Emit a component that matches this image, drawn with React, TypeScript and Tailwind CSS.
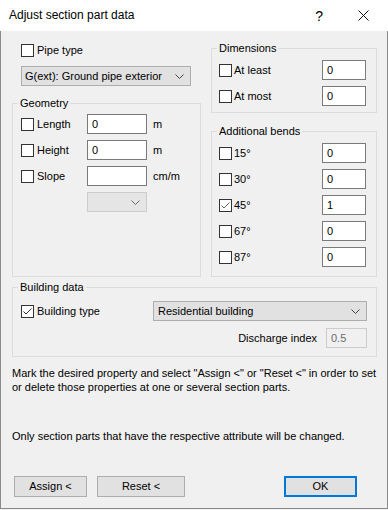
import React from "react";

function Check({ checked, light }: { checked?: boolean; light?: boolean }) {
  return (
    <span className="w-[13px] h-[13px] border border-[#333333] bg-white flex items-center justify-center shrink-0">
      {checked && (
        <svg width="11" height="11" viewBox="0 0 11 11">
          <path
            d="M1.5 5.5 L4 8 L9.5 2.5"
            fill="none"
            stroke={light ? "#6a6a6a" : "#333333"}
            strokeWidth="1"
          />
        </svg>
      )}
    </span>
  );
}

function Chevron({ color = "#444444" }: { color?: string }) {
  return (
    <svg width="9" height="5" viewBox="0 0 9 5" className="shrink-0">
      <path d="M0.5 0.5 L4.5 4.5 L8.5 0.5" fill="none" stroke={color} strokeWidth="1" />
    </svg>
  );
}

function Input({ value, w }: { value: string; w: string }) {
  return (
    <div className={`${w} h-[20px] border border-[#7a7a7a] bg-white flex items-center px-[4px] shrink-0`}>
      {value}
    </div>
  );
}

function GeoRow({ label, value, unit }: { label: string; value: string; unit: string }) {
  return (
    <div className="flex items-center h-[20px]">
      <Check />
      <span className="ml-[3px] w-[50px]">{label}</span>
      <Input value={value} w="w-[60px]" />
      <span className="ml-[6px]">{unit}</span>
    </div>
  );
}

function RightRow({ label, value, checked }: { label: string; value: string; checked?: boolean }) {
  return (
    <div className="flex items-center h-[20px]">
      <Check checked={checked} light />
      <span className="ml-[2px] w-[88px]">{label}</span>
      <Input value={value} w="w-[44px]" />
    </div>
  );
}

export default function App() {
  return (
    <div className="w-[388px] h-[510px] bg-[#f0f0f0] text-[11px] leading-[13px] text-black font-['Liberation_Sans',Arial,sans-serif]">
      <div className="h-[31px] bg-white flex items-center">
        <span className="ml-[9px] text-[12px] font-['Liberation_Sans',Arial,sans-serif]">Adjust section part data</span>
        <span className="ml-auto text-[14px] leading-[14px]">?</span>
        <svg width="11" height="11" viewBox="0 0 11 11" className="ml-[35px] mr-[19px]">
          <path d="M0.5 0.5 L10.5 10.5 M10.5 0.5 L0.5 10.5" stroke="#111111" strokeWidth="1" fill="none" />
        </svg>
      </div>
      <div className="h-[478px] border-l border-r border-b border-[#8a8a8a] flex flex-col">
        <div className="flex pl-[11px] gap-[10px]">
          <div className="w-[189px] flex flex-col">
            <div className="mt-[13px] ml-[9px] h-[13px] flex items-center">
              <Check />
              <span className="ml-[3px]">Pipe type</span>
            </div>
            <div className="mt-[9px] ml-[9px] w-[170px] h-[20px] bg-[#e1e1e1] border border-[#adadad] flex items-center justify-between pl-[3px] pr-[6px]">
              <span>G(ext): Ground pipe exterior</span>
              <Chevron />
            </div>
            <fieldset className="mt-[11px] h-[180px] border border-[#dcdcdc]">
              <legend className="ml-[5px] px-[2px] leading-[13px]">Geometry</legend>
              <div className="mt-[4px] pl-[8px] flex flex-col gap-[6px]">
                <GeoRow label="Length" value="0" unit="m" />
                <GeoRow label="Height" value="0" unit="m" />
                <GeoRow label="Slope" value="" unit="cm/m" />
                <div className="ml-[66px] w-[60px] h-[20px] bg-[#e5e5e5] border border-[#cccccc] flex items-center justify-end pr-[6px]">
                  <Chevron color="#6a6a6a" />
                </div>
              </div>
            </fieldset>
          </div>
          <div className="w-[166px] flex flex-col">
            <fieldset className="mt-[11px] h-[71px] border border-[#dcdcdc]">
              <legend className="ml-[5px] px-[2px] leading-[13px]">Dimensions</legend>
              <div className="mt-[5px] pl-[7px] flex flex-col gap-[6px]">
                <RightRow label="At least" value="0" />
                <RightRow label="At most" value="0" />
              </div>
            </fieldset>
            <fieldset className="mt-[12px] h-[152px] border border-[#dcdcdc]">
              <legend className="ml-[5px] px-[2px] leading-[13px]">Additional bends</legend>
              <div className="mt-[5px] pl-[7px] flex flex-col gap-[6px]">
                <RightRow label="15°" value="0" />
                <RightRow label="30°" value="0" />
                <RightRow label="45°" value="1" checked />
                <RightRow label="67°" value="0" />
                <RightRow label="87°" value="0" />
              </div>
            </fieldset>
          </div>
        </div>
        <fieldset className="ml-[11px] mt-[4px] w-[365px] h-[76px] border border-[#dcdcdc]">
          <legend className="ml-[5px] px-[2px] leading-[13px]">Building data</legend>
          <div className="mt-[7px] pl-[8px] flex items-center h-[20px]">
            <Check checked />
            <span className="ml-[3px] w-[116px]">Building type</span>
            <div className="w-[214px] h-[20px] bg-[#e1e1e1] border border-[#adadad] flex items-center justify-between pl-[4px] pr-[6px]">
              <span>Residential building</span>
              <Chevron />
            </div>
          </div>
          <div className="mt-[7px] pr-[9px] flex items-center justify-end h-[20px]">
            <span>Discharge index</span>
            <div className="ml-[9px] w-[41px] h-[20px] border border-[#cccccc] bg-[#f0f0f0] text-[#6d6d6d] flex items-center px-[4px]">
              0.5
            </div>
          </div>
        </fieldset>
        <p className="mt-[9px] ml-[11px] leading-[14px] whitespace-nowrap">
          Mark the desired property and select "Assign &lt;" or "Reset &lt;" in order to set
          <br />
          or delete those properties at one or several section parts.
        </p>
        <p className="mt-[35px] ml-[11px] leading-[14px] whitespace-nowrap">
          Only section parts that have the respective attribute will be changed.
        </p>
        <div className="mt-[33px] flex">
          <button className="ml-[13px] w-[73px] h-[21px] bg-[#e1e1e1] border border-[#adadad] flex items-center justify-center">
            Assign &lt;
          </button>
          <button className="ml-[10px] w-[88px] h-[21px] bg-[#e1e1e1] border border-[#adadad] flex items-center justify-center">
            Reset &lt;
          </button>
          <button className="ml-auto mr-[30px] w-[73px] h-[21px] bg-[#e1e1e1] border-2 border-[#0078d7] flex items-center justify-center">
            OK
          </button>
        </div>
      </div>
    </div>
  );
}
